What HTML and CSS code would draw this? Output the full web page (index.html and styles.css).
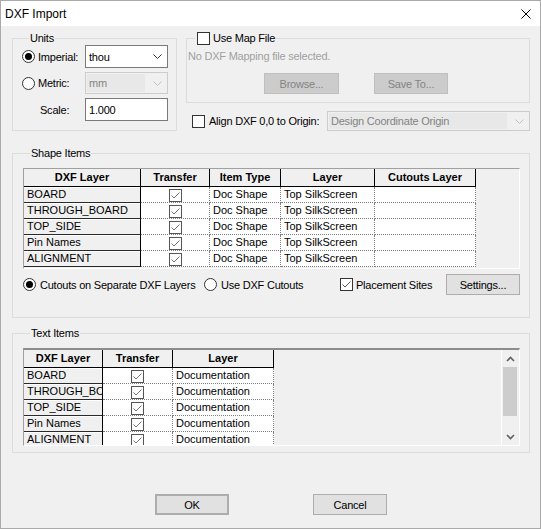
FILE: index.html
```html
<!DOCTYPE html>
<html>
<head>
<meta charset="utf-8">
<title>DXF Import</title>
<link rel="stylesheet" href="styles.css">
</head>
<body>
<div class="window">
  <div class="titlebar">
    <span class="title">DXF Import</span>
    <svg class="close" width="10" height="10" viewBox="0 0 10 10"><path d="M0.5 0.5 L9.5 9.5 M9.5 0.5 L0.5 9.5" stroke="#000" stroke-width="1" fill="none"/></svg>
  </div>
  <div class="content">
    <div class="top-row">
      <div class="group units">
        <div class="legend">Units</div>
        <div class="units-grid">
          <div class="opt"><span class="rb on"></span><span>Imperial:</span></div>
          <div class="combo"><span class="combo-text">thou</span><svg class="chev" width="9" height="5" viewBox="0 0 9 5"><polyline points="0.5,0.5 4.5,4.5 8.5,0.5" fill="none" stroke="#333" stroke-width="1"/></svg></div>
          <div class="opt"><span class="rb"></span><span>Metric:</span></div>
          <div class="combo disabled"><span class="combo-text">mm</span><svg class="chev" width="9" height="5" viewBox="0 0 9 5"><polyline points="0.5,0.5 4.5,4.5 8.5,0.5" fill="none" stroke="#bfbfbf" stroke-width="1"/></svg></div>
          <div class="scale-label">Scale:</div>
          <div class="edit">1.000</div>
        </div>
      </div>
      <div class="right-col">
        <div class="group map">
          <div class="legend map-legend"><span class="cb"></span><span class="cb-label">Use Map File</span></div>
          <div class="map-note">No DXF Mapping file selected.</div>
          <div class="map-buttons">
            <button class="btn" disabled>Browse...</button>
            <button class="btn" disabled>Save To...</button>
          </div>
        </div>
        <div class="align-row">
          <span class="cb"></span><span class="cb-label">Align DXF 0,0 to Origin:</span>
          <div class="combo disabled wide"><span class="combo-text">Design Coordinate Origin</span><svg class="chev" width="9" height="5" viewBox="0 0 9 5"><polyline points="0.5,0.5 4.5,4.5 8.5,0.5" fill="none" stroke="#bfbfbf" stroke-width="1"/></svg></div>
        </div>
      </div>
    </div>

    <div class="group shape">
      <div class="legend">Shape Items</div>
      <div class="frame shape-frame">
        <div class="grid shape-grid">
          <div class="hd">DXF Layer</div><div class="hd">Transfer</div><div class="hd">Item Type</div><div class="hd">Layer</div><div class="hd">Cutouts Layer</div>

          <div class="rh">BOARD</div><div class="dc ck"><span class="cb tcb"><svg width="11" height="11" viewBox="0 0 11 11"><polyline points="1.5,5.5 4,8 9.5,2.5" fill="none" stroke="#777" stroke-width="1"/></svg></span></div><div class="dc">Doc Shape</div><div class="dc">Top SilkScreen</div><div class="dc"></div>

          <div class="rh">THROUGH_BOARD</div><div class="dc ck"><span class="cb tcb"><svg width="11" height="11" viewBox="0 0 11 11"><polyline points="1.5,5.5 4,8 9.5,2.5" fill="none" stroke="#777" stroke-width="1"/></svg></span></div><div class="dc">Doc Shape</div><div class="dc">Top SilkScreen</div><div class="dc"></div>

          <div class="rh">TOP_SIDE</div><div class="dc ck"><span class="cb tcb"><svg width="11" height="11" viewBox="0 0 11 11"><polyline points="1.5,5.5 4,8 9.5,2.5" fill="none" stroke="#777" stroke-width="1"/></svg></span></div><div class="dc">Doc Shape</div><div class="dc">Top SilkScreen</div><div class="dc"></div>

          <div class="rh">Pin Names</div><div class="dc ck"><span class="cb tcb"><svg width="11" height="11" viewBox="0 0 11 11"><polyline points="1.5,5.5 4,8 9.5,2.5" fill="none" stroke="#777" stroke-width="1"/></svg></span></div><div class="dc">Doc Shape</div><div class="dc">Top SilkScreen</div><div class="dc"></div>

          <div class="rh">ALIGNMENT</div><div class="dc ck"><span class="cb tcb"><svg width="11" height="11" viewBox="0 0 11 11"><polyline points="1.5,5.5 4,8 9.5,2.5" fill="none" stroke="#777" stroke-width="1"/></svg></span></div><div class="dc">Doc Shape</div><div class="dc">Top SilkScreen</div><div class="dc"></div>
        </div>
      </div>
      <div class="shape-options">
        <div class="o1"><span class="rb on"></span><span>Cutouts on Separate DXF Layers</span></div>
        <div class="o2"><span class="rb"></span><span>Use DXF Cutouts</span></div>
        <div class="o3"><span class="cb"><svg width="11" height="11" viewBox="0 0 11 11"><polyline points="1.5,5.5 4,8 9.5,2.5" fill="none" stroke="#555" stroke-width="1"/></svg></span><span>Placement Sites</span></div>
        <button class="btn">Settings...</button>
      </div>
    </div>

    <div class="group text">
      <div class="legend">Text Items</div>
      <div class="frame text-frame">
        <div class="grid text-grid">
          <div class="hd">DXF Layer</div><div class="hd">Transfer</div><div class="hd">Layer</div>

          <div class="rh">BOARD</div><div class="dc ck"><span class="cb tcb"><svg width="11" height="11" viewBox="0 0 11 11"><polyline points="1.5,5.5 4,8 9.5,2.5" fill="none" stroke="#777" stroke-width="1"/></svg></span></div><div class="dc">Documentation</div>

          <div class="rh">THROUGH_BOARD</div><div class="dc ck"><span class="cb tcb"><svg width="11" height="11" viewBox="0 0 11 11"><polyline points="1.5,5.5 4,8 9.5,2.5" fill="none" stroke="#777" stroke-width="1"/></svg></span></div><div class="dc">Documentation</div>

          <div class="rh">TOP_SIDE</div><div class="dc ck"><span class="cb tcb"><svg width="11" height="11" viewBox="0 0 11 11"><polyline points="1.5,5.5 4,8 9.5,2.5" fill="none" stroke="#777" stroke-width="1"/></svg></span></div><div class="dc">Documentation</div>

          <div class="rh">Pin Names</div><div class="dc ck"><span class="cb tcb"><svg width="11" height="11" viewBox="0 0 11 11"><polyline points="1.5,5.5 4,8 9.5,2.5" fill="none" stroke="#777" stroke-width="1"/></svg></span></div><div class="dc">Documentation</div>

          <div class="rh">ALIGNMENT</div><div class="dc ck"><span class="cb tcb"><svg width="11" height="11" viewBox="0 0 11 11"><polyline points="1.5,5.5 4,8 9.5,2.5" fill="none" stroke="#777" stroke-width="1"/></svg></span></div><div class="dc">Documentation</div>
        </div>
        <div class="scrollbar">
          <div class="sb-btn"><svg width="9" height="6" viewBox="0 0 9 6"><polyline points="1,5 4.5,1.5 8,5" fill="none" stroke="#606060" stroke-width="1.6"/></svg></div>
          <div class="sb-track"><div class="sb-thumb"></div></div>
          <div class="sb-btn"><svg width="9" height="6" viewBox="0 0 9 6"><polyline points="1,1 4.5,4.5 8,1" fill="none" stroke="#606060" stroke-width="1.6"/></svg></div>
        </div>
      </div>
    </div>

    <div class="buttons">
      <button class="btn default">OK</button>
      <button class="btn">Cancel</button>
    </div>
  </div>
</div>
</body>
</html>
```

FILE: styles.css
```css
* { box-sizing: border-box; }

body {
  margin: 0;
  font-family: "Liberation Sans", Arial, sans-serif;
  font-size: 11px;
  color: #000;
  background: #f0f0f0;
}

.window {
  width: 541px;
  height: 529px;
  border: 1px solid #aaaaaa;
  background: #f0f0f0;
  display: flex;
  flex-direction: column;
}

.titlebar {
  height: 25px;
  flex-shrink: 0;
  background: #fff;
  display: flex;
  align-items: center;
  justify-content: space-between;
  padding: 0 9px 0 4px;
}
.title { font-size: 12px; }
.close { display: block; }

.content {
  flex: 1;
  display: flex;
  flex-direction: column;
  padding: 12px 10px 0 11px;
  letter-spacing: -0.22px;
}

.group { border: 1px solid #dcdcdc; }
.legend {
  display: flex;
  align-items: center;
  width: max-content;
  height: 13px;
  line-height: 13px;
  margin: -7px 0 0 7px;
  padding: 0 1px;
  background: #f0f0f0;
}

.top-row {
  display: flex;
  align-items: flex-start;
  gap: 9px;
}

/* Units */
.units {
  width: 165px;
  padding: 0 8px 9px 9px;
}
.units-grid {
  display: grid;
  grid-template-columns: 63px 83px;
  grid-template-rows: 23px 22px 23px;
  row-gap: 4px;
}
.opt {
  display: flex;
  align-items: center;
  gap: 3px;
}
.scale-label {
  display: flex;
  align-items: center;
  padding-left: 18px;
}

.rb {
  width: 13px;
  height: 13px;
  border: 1px solid #333;
  border-radius: 50%;
  background: #fff;
  display: inline-flex;
  align-items: center;
  justify-content: center;
  flex-shrink: 0;
}
.rb.on::after {
  content: "";
  width: 7px;
  height: 7px;
  border-radius: 50%;
  background: #000;
}

.cb {
  width: 13px;
  height: 13px;
  border: 1px solid #333;
  background: #fff;
  display: inline-flex;
  flex-shrink: 0;
}
.cb svg { display: block; }
.cb-label { margin-left: 4px; }

.combo {
  display: flex;
  align-items: center;
  justify-content: space-between;
  background: #fff;
  border: 1px solid #7a7a7a;
  padding: 0 5px 0 3px;
}
.combo .chev { display: block; }
.combo.disabled {
  background: #f0f0f0;
  border-color: #cccccc;
  color: #838383;
  padding: 1px 5px 1px 1px;
  align-items: stretch;
}
.combo.disabled .combo-text {
  flex: 1;
  background: #e8e8e8;
  display: flex;
  align-items: center;
  padding-left: 2px;
  margin-right: 8px;
}
.combo.disabled .chev { align-self: center; }

.edit {
  display: flex;
  align-items: center;
  background: #fff;
  border: 1px solid #7a7a7a;
  padding-left: 3px;
}

/* Map file */
.right-col {
  flex: 1;
  display: flex;
  flex-direction: column;
}
.map { padding: 0 0 8px 1px; }
.map-legend { padding-left: 2px; }
.map-legend .cb-label { margin-left: 3px; }
.map-note {
  margin-top: 5px;
  line-height: 13px;
  color: #a0a0a0;
}
.map-buttons {
  display: flex;
  gap: 35px;
  margin-top: 10px;
  padding-left: 76px;
}

.btn {
  width: 74px;
  height: 21px;
  padding: 0;
  font-family: inherit;
  font-size: 11px;
  letter-spacing: -0.22px;
  color: #000;
  background: #e1e1e1;
  border: 1px solid #adadad;
}
.btn:disabled {
  background: #cccccc;
  border-color: #bfbfbf;
  color: #838383;
}
.map-buttons .btn:first-child { width: 75px; }
.btn.default { border: 2px solid #adadad; }

.align-row {
  display: flex;
  align-items: center;
  margin-top: 8px;
  padding-left: 6px;
  height: 20px;
}
.combo.wide {
  margin-left: auto;
  width: 203px;
  height: 20px;
}

/* Shape items */
.shape {
  margin-top: 22px;
  padding: 0 9px 22px 10px;
}
.frame {
  margin-top: 8px;
  background: #f0f0f0;
  border-top: 1px solid #a0a0a0;
  border-left: 1px solid #a0a0a0;
  border-right: 1px solid #fff;
  border-bottom: 1px solid #fff;
  overflow: hidden;
}
.shape-frame { height: 101px; }

.grid {
  display: grid;
  width: max-content;
  letter-spacing: 0;
}
.shape-grid {
  grid-template-columns: 117px 69px 71px 94px 101px;
  grid-template-rows: 18px repeat(5, 16px);
}
.text-grid {
  grid-template-columns: 79px 70px 101px;
  grid-template-rows: 18px repeat(5, 16px);
}

.hd {
  background: #f0f0f0;
  border-right: 1px solid #000;
  border-bottom: 1px solid #000;
  font-weight: bold;
  text-align: center;
  line-height: 17px;
  white-space: nowrap;
  overflow: hidden;
}
.rh {
  background: #f0f0f0;
  border-right: 1px solid #000;
  border-bottom: 1px solid #2a2a2a;
  box-shadow: inset 0 1px 0 #fff;
  padding-left: 3px;
  line-height: 15px;
  white-space: nowrap;
  overflow: hidden;
}
.dc {
  background: #fff;
  border-right: 1px dotted #808080;
  border-bottom: 1px dotted #808080;
  padding-left: 3px;
  line-height: 15px;
  white-space: nowrap;
  overflow: hidden;
}
.dc.ck {
  display: flex;
  justify-content: center;
  align-items: flex-end;
  padding-left: 0;
}
.tcb { border-color: #555; }

.shape-options {
  display: flex;
  align-items: center;
  margin-top: 5px;
  height: 21px;
}
.shape-options .o1,
.shape-options .o2,
.shape-options .o3 {
  display: flex;
  align-items: center;
  gap: 4px;
}
.o1 { width: 181px; }
.o2 { width: 136px; }
.o3 { width: 106px; }
.o3 .cb { margin-right: -1px; }

/* Text items */
.text {
  margin-top: 15px;
  padding: 0 9px 6px 10px;
}
.text-frame {
  height: 98px;
  border-top: 2px solid #8c8c8c;
  display: flex;
  justify-content: space-between;
}
.scrollbar {
  width: 17px;
  margin-right: 1px;
  display: flex;
  flex-direction: column;
  border-left: 1px solid #fff;
  background: #f0f0f0;
}
.sb-btn {
  height: 17px;
  display: flex;
  align-items: center;
  justify-content: center;
}
.sb-btn svg { display: block; }
.sb-track {
  flex: 1;
  padding: 0 1px;
}
.sb-thumb {
  height: 49px;
  background: #cdcdcd;
}

/* Bottom buttons */
.buttons {
  display: flex;
  justify-content: center;
  gap: 84px;
  margin-top: 41px;
}
```
